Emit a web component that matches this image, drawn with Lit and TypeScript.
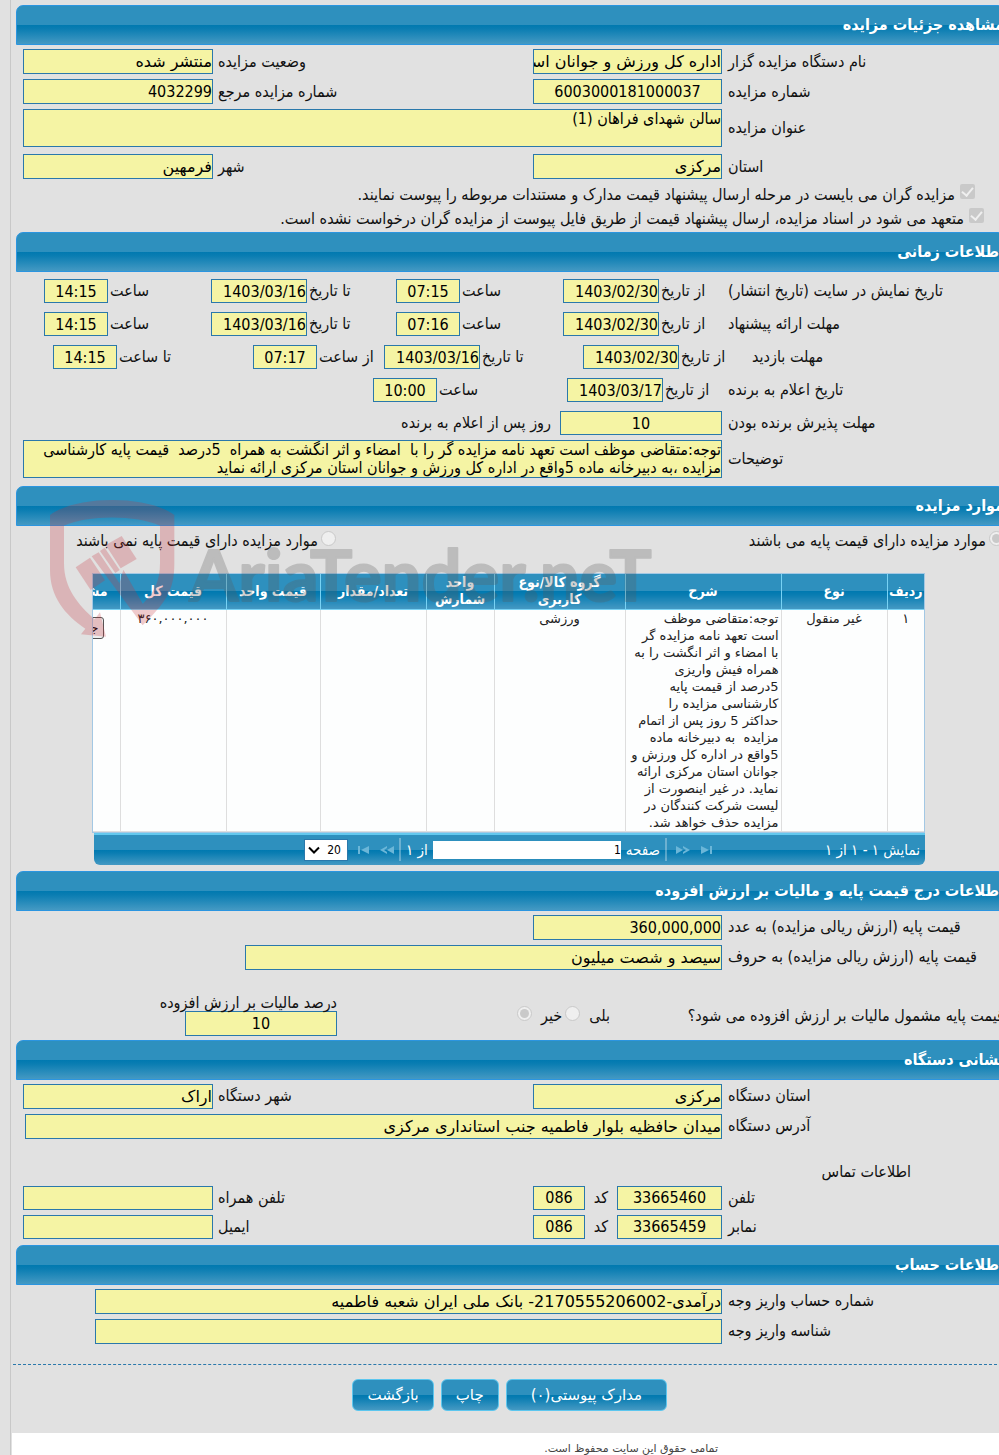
import { LitElement, html, css } from "lit";
import { customElement } from "lit/decorators.js";

@customElement("app-root")
export class AppRoot extends LitElement {
  static styles = css`
    :host {
      display: block;
      overflow: hidden;
      background: #e1e1e1;
      color: #111;
      font-family: "DejaVu Sans Condensed", "DejaVu Sans", sans-serif;
      font-size: 16px;
      line-height: 18px;
      --band: linear-gradient(#2e90be 0, #2e90be 50%, #0079b0 50%, #0a7db2 60%, #4499c3 100%);
    }
    * { box-sizing: border-box; }
    .page {
      direction: rtl;
      margin-left: 10px;
      border-left: 1px solid #c8c8c8;
      padding-top: 5px;
    }
    .title {
      margin: 0 -6px 0 5px;
      height: 40px;
      padding: 0;
      border: 1px solid #2b95e0;
      border-radius: 7px 7px 0 0;
      background: var(--band);
      color: #fff;
      font-size: 16px;
      font-weight: 700;
      line-height: 38px;
    }
    .body { padding: 4px 0 0 12px; display: flex; flex-direction: column; gap: 5px; }
    .row { display: grid; grid-template-columns: 271px minmax(0, 1fr); column-gap: 6px; align-items: center; }
    .pair { display: grid; grid-template-columns: 189px minmax(0, 1fr) 190px; column-gap: 5px; align-items: center; }
    .cap { text-align: left; white-space: nowrap; }
    input, textarea, select, button { font-family: inherit; margin: 0; }
    .field {
      display: block;
      width: 100%;
      height: 25px;
      padding: 0;
      border: 1px solid #2a78ab;
      border-radius: 0;
      background: #f5f4a4;
      color: #000;
      font-size: 16px;
      outline: none;
    }
    .text { font-family: "DejaVu Sans", sans-serif; }
    .mid { text-align: center; }
    .area { height: 38px; line-height: 18px; resize: none; overflow: hidden; white-space: pre; }
    .after-area { margin-top: 2px; }
    .checks { display: flex; flex-direction: column; padding-bottom: 1px; margin-top: -1px; }
    .check { display: flex; align-items: center; gap: 5px; height: 24px; padding-right: 15px; white-space: nowrap; }
    .inset { padding-right: 24px; }
    .tick, .dot {
      appearance: none;
      flex: none;
      width: 15px;
      height: 15px;
      border-radius: 2px;
      background: #c9c9c9;
      display: grid;
      place-items: center;
    }
    .tick { margin-bottom: 7px; }
    .tick:checked::after {
      content: "";
      width: 5px;
      height: 9px;
      margin-bottom: 2px;
      border: solid #efefef;
      border-width: 0 2px 2px 0;
      transform: rotate(40deg);
    }
    .dot { border-radius: 50%; border: 1px solid #c9c9c9; background: #efefef; }
    .dot:checked::after { content: ""; width: 9px; height: 9px; border-radius: 50%; background: #c9c9c9; }

    .times { padding-top: 7px; padding-bottom: 8px; gap: 9px; }
    .slots { display: grid; grid-template-columns: 159fr 167fr 185fr 167fr; padding-left: 21px; }
    .times .field:not(.area) { height: 24px; }
    .visit { grid-template-columns: 247px minmax(0, 1fr); }
    .visit .slots { grid-template-columns: 163fr 199fr 131fr 200fr; padding-left: 30px; }
    .winner .slots { grid-template-columns: 155px 194px; }
    .slot { display: flex; align-items: center; justify-content: flex-end; gap: 2px; white-space: nowrap; }
    .date { width: 96px; }
    .hour { width: 64px; text-align: center; }
    .days { display: flex; align-items: center; gap: 9px; }
    .days .field { width: 162px; }
    .note { margin-top: -4px; }

    .items { position: relative; padding-bottom: 6px; }
    .choices { display: grid; grid-template-columns: 663px 1fr; height: 34px; padding-top: 2px; white-space: nowrap; }
    .choice { display: flex; gap: 3px; align-items: center; height: 26px; margin-right: -5px; }
    .choice .dot { margin-bottom: 5px; }
    .choice:last-child { margin-right: 0; }
    .table-box { margin: 13px 74px 0 81px; }
    .clip { overflow: hidden; border: 1px solid #a3c8e4; background: #fdfefe; }
    .list { border-collapse: collapse; table-layout: fixed; width: 900px; }
    .list th {
      height: 35px;
      padding: 0;
      background: var(--band);
      border-left: 1px solid #78d2f4;
      border-bottom: 1px solid #78d2f4;
      color: #fff;
      font-size: 14px;
      font-weight: 700;
      line-height: 17px;
    }
    .list td {
      padding: 0 2px;
      border-left: 1px solid #dedede;
      border-bottom: 1px solid #dedede;
      vertical-align: top;
      text-align: center;
      color: #222;
      font-family: "DejaVu Sans", sans-serif;
      font-size: 13px;
      line-height: 17px;
    }
    .list .desc { text-align: right; white-space: pre; }
    .list .edge { text-align: right; padding-right: 12px; }
    .list td.edge { padding: 7px 16px 0 0; }
    .open { height: 22px; padding: 0 4px; border: 1px solid #555; border-radius: 3px; background: #eee; font-size: 13px; }
    .c1 { width: 37px; } .c2 { width: 106px; } .c3 { width: 156px; } .c4 { width: 131px; }
    .c5 { width: 68px; } .c6 { width: 106px; } .c7 { width: 94px; } .c8 { width: 106px; }
    .pager {
      display: grid;
      grid-template-columns: 207px auto 1fr;
      align-items: center;
      height: 32px;
      margin-left: 2px;
      padding-right: 5px;
      border-top: 2px solid #63c8ee;
      border-radius: 0 0 6px 6px;
      background: var(--band);
      color: #fff;
      font-size: 15px;
      white-space: nowrap;
    }
    .controls { display: flex; align-items: center; gap: 5px; }
    .step { padding: 0; border: 0; background: none; display: flex; width: 14px; margin-left: 4px; }
    .bar { width: 2px; height: 23px; background: rgba(255, 255, 255, 0.3); }
    .num { width: 188px; height: 18px; border: 0; padding: 0; background: #fff; color: #000; font-size: 12px; }
    .size { position: relative; display: flex; }
    .size select { appearance: none; width: 44px; height: 22px; padding: 0 6px 0 0; border: 1px solid #2a78ab; border-radius: 0; background: #fff; color: #000; font-size: 12px; }
    .size svg { position: absolute; left: 4px; top: 7px; pointer-events: none; }

    .mark { position: absolute; left: 37px; top: 6px; pointer-events: none; }

    .words { width: 477px; }
    .w-num { width: 189px; }
    .vat { display: flex; align-items: center; height: 65px; padding-top: 17px; white-space: nowrap; margin-right: -5px; }
    .vat-q { width: 318px; }
    .yesno { display: flex; align-items: center; gap: 3px; margin-right: 76px; width: 94px; }
    .yesno .dot { margin-bottom: 5px; }
    .yesno .gap { margin-right: 6px; }
    .rate { width: 152px; margin-right: 179px; }
    .rate label { display: block; line-height: 16px; }

    .wide { padding-left: 2px; }
    .address { padding-bottom: 6px; }
    .contact { margin: 19px 88px 0 0; }
    .phone { display: grid; grid-template-columns: 105px auto 52px; justify-content: space-between; align-items: center; }
    .lines .field { height: 24px; }
    .account .wide { padding-left: 72px; }

    .actions {
      margin: 20px 2px 0;
      padding: 14px 330px 22px 0;
      border-top: 1px dashed #2a78ab;
      display: flex;
      gap: 7px;
    }
    .act {
      height: 32px;
      padding: 0 24px;
      border: 1px solid #5cc6ee;
      border-radius: 6px;
      background: var(--band);
      color: #fff;
      font-family: "DejaVu Sans", sans-serif;
      font-size: 15px;
    }
    .snug { padding: 0 14px; }
    .foot { margin-left: 1px; height: 22px; overflow: hidden; background: #fff; color: #444; font-family: "DejaVu Sans", sans-serif; font-size: 11px; line-height: 32px; padding-right: 281px; }
  `;

  private field(id: string, value: string, cls = "") {
    return html`<input class="field ${cls}" id=${id} type="text" readonly .value=${value} />`;
  }

  private cap(id: string, text: string) {
    return html`<label class="cap" for=${id}>${text}</label>`;
  }

  private slot4(id: string, text: string, value: string, cls: string) {
    return html`<span class="slot"><label for=${id}>${text}</label>${this.field(id, value, cls)}</span>`;
  }

  private step(label: string, d: string) {
    return html`<button class="step" type="button" aria-label=${label}>
      <svg width="14" height="8" viewBox="0 0 14 8"><path d=${d} fill="#6bb6d8" /></svg>
    </button>`;
  }

  render() {
    return html`<div class="page">
      <section>
        <h2 class="title">مشاهده جزئیات مزایده</h2>
        <div class="body">
          <div class="row">
            ${this.cap("org", "نام دستگاه مزایده گزار")}
            <div class="pair">
              ${this.field("org", "اداره کل ورزش و جوانان استان مرکزی", "text")}
              ${this.cap("status", "وضعیت مزایده")} ${this.field("status", "منتشر شده", "text")}
            </div>
          </div>
          <div class="row">
            ${this.cap("no", "شماره مزایده")}
            <div class="pair">
              ${this.field("no", "6003000181000037", "mid")}
              ${this.cap("ref", "شماره مزایده مرجع")} ${this.field("ref", "4032299")}
            </div>
          </div>
          <div class="row">
            ${this.cap("subject", "عنوان مزایده")}
            <textarea class="field area" id="subject" readonly .value=${"سالن شهدای فراهان (1)"}></textarea>
          </div>
          <div class="row after-area">
            ${this.cap("province", "استان")}
            <div class="pair">
              ${this.field("province", "مرکزی", "text")} ${this.cap("city", "شهر")} ${this.field("city", "فرمهین", "text")}
            </div>
          </div>
          <div class="checks">
            <label class="check inset"><input class="tick" type="checkbox" checked disabled />مزایده گران می بایست در مرحله ارسال پیشنهاد قیمت مدارک و مستندات مربوطه را پیوست نمایند.</label>
            <label class="check"><input class="tick" type="checkbox" checked disabled />متعهد می شود در اسناد مزایده، ارسال پیشنهاد قیمت از طریق فایل پیوست از مزایده گران درخواست نشده است.</label>
          </div>
        </div>
      </section>

      <section>
        <h2 class="title">اطلاعات زمانی</h2>
        <div class="body times">
          ${[
            ["show", "تاریخ نمایش در سایت (تاریخ انتشار)", "07:15"],
            ["offer", "مهلت ارائه پیشنهاد", "07:16"],
          ].map(
            ([k, t, h]) => html`<div class="row">
              <span class="cap">${t}</span>
              <div class="slots">
                ${this.slot4(k + "1", "از تاریخ", "1403/02/30", "date")}
                ${this.slot4(k + "2", "ساعت", h, "hour")}
                ${this.slot4(k + "3", "تا تاریخ", "1403/03/16", "date")}
                ${this.slot4(k + "4", "ساعت", "14:15", "hour")}
              </div>
            </div>`
          )}
          <div class="row visit">
            <span class="cap">مهلت بازدید</span>
            <div class="slots">
              ${this.slot4("v1", "از تاریخ", "1403/02/30", "date")}
              ${this.slot4("v2", "تا تاریخ", "1403/03/16", "date")}
              ${this.slot4("v3", "از ساعت", "07:17", "hour")}
              ${this.slot4("v4", "تا ساعت", "14:15", "hour")}
            </div>
          </div>
          <div class="row winner">
            <span class="cap">تاریخ اعلام به برنده</span>
            <div class="slots">
              ${this.slot4("w1", "از تاریخ", "1403/03/17", "date")}
              ${this.slot4("w2", "ساعت", "10:00", "hour")}
            </div>
          </div>
          <div class="row">
            ${this.cap("accept", "مهلت پذیرش برنده بودن")}
            <div class="days">${this.field("accept", "10", "mid")}<span>روز پس از اعلام به برنده</span></div>
          </div>
          <div class="row note">
            ${this.cap("note", "توضیحات")}
            <textarea class="field area" id="note" readonly
              .value=${"توجه:متقاضی موظف است تعهد نامه مزایده گر را با  امضاء و اثر انگشت به همراه  5درصد  قیمت پایه کارشناسی\nمزایده ،به دبیرخانه ماده 5واقع در اداره کل ورزش و جوانان استان مرکزی ارائه نماید"}></textarea>
          </div>
        </div>
      </section>

      <section class="items">
        <h2 class="title">موارد مزایده</h2>
        <div class="choices">
          <label class="choice"><input class="dot" type="radio" name="base" checked disabled />موارد مزایده دارای قیمت پایه می باشند</label>
          <label class="choice"><input class="dot" type="radio" name="base" disabled />موارد مزایده دارای قیمت پایه نمی باشند</label>
        </div>
        <div class="table-box">
          <div class="clip">
            <table class="list">
              <colgroup>
                <col class="c1" /><col class="c2" /><col class="c3" /><col class="c4" /><col class="c5" /><col class="c6" /><col class="c7" /><col class="c8" /><col />
              </colgroup>
              <thead>
                <tr>
                  <th>ردیف</th><th>نوع</th><th>شرح</th><th>گروه کالا/نوع<br />کاربری</th><th>واحد<br />شمارش</th>
                  <th>تعداد/مقدار</th><th>قیمت واحد</th><th>قیمت کل</th><th class="edge">مشاهده</th>
                </tr>
              </thead>
              <tbody>
                <tr>
                  <td>۱</td>
                  <td>غیر منقول</td>
                  <td class="desc">${"توجه:متقاضی موظف\nاست تعهد نامه مزایده گر\nبا امضاء و اثر انگشت را به\nهمراه فیش واریزی\n5درصد از قیمت پایه\nکارشناسی مزایده را\nحداکثر 5 روز پس از اتمام\nمزایده  به دبیرخانه ماده\n5واقع در اداره کل ورزش و\nجوانان استان مرکزی ارائه\nنماید. در غیر اینصورت از\nلیست شرکت کنندگان در\nمزایده حذف خواهد شد."}</td>
                  <td>ورزشی</td><td></td><td></td><td></td>
                  <td>۳۶۰,۰۰۰,۰۰۰</td>
                  <td class="edge"><button class="open" type="button">جزئیات</button></td>
                </tr>
              </tbody>
            </table>
          </div>
          <div class="pager">
            <span>نمایش ۱ - ۱ از ۱</span>
            <div class="controls">
              ${this.step("آخرین", "M2 0L10 4L2 8ZM11 0H13V8H11Z")}
              ${this.step("بعدی", "M0 0L7 4L0 8ZM7 0L14 4L7 8V6L10 4L7 2Z")}
              <span class="bar"></span>
              <label for="pg">صفحه</label>
              <input class="num" id="pg" type="text" .value=${"1"} />
              <span>از ۱</span>
              <span class="bar"></span>
              ${this.step("قبلی", "M14 0L7 4L14 8ZM7 0L0 4L7 8V6L4 4L7 2Z")}
              ${this.step("اولین", "M12 0L4 4L12 8ZM1 0H3V8H1Z")}
              <span class="size">
                <select aria-label="تعداد در صفحه"><option>20</option></select>
                <svg width="12" height="9" viewBox="0 0 12 9"><path d="M1 1.5L6 6.5L11 1.5" fill="none" stroke="#000" stroke-width="2" /></svg>
              </span>
            </div>
          </div>
        </div>
        <svg class="mark" width="620" height="150" viewBox="144 36 1860 450" aria-hidden="true">
          <g fill="#c8323c" opacity="0.25">
            <path d="M150 105C230 45 443 45 523 105V250C523 330 500 365 428 436L354 325L370 270L428 372C465 335 480 300 480 250V137C410 104 262 104 192 137V250C192 325 235 375 284 418L300 397L318 470L243 463L256 446C195 405 150 350 150 270Z" />
            <path d="M275 229L296 217L362 315L370 270L428 372V436Z" />
            <path d="M227 262L270 233L315 301L272 330Z" />
            <path d="M300 213L314 203L359 270L346 279Z" />
            <path d="M317 195L365 168L410 237L362 265Z" />
          </g>
          <text x="568" y="363" direction="ltr" fill="#5a5a5a" stroke="#5a5a5a" stroke-width="6" stroke-linejoin="round" opacity="0.27" font-family="Lato, Liberation Sans, sans-serif" font-weight="700" font-size="212">AriaTender.neT</text>
        </svg>
      </section>

      <section>
        <h2 class="title">اطلاعات درج قیمت پایه و مالیات بر ارزش افزوده</h2>
        <div class="body">
          <div class="row">${this.cap("base", "قیمت پایه (ارزش ریالی مزایده) به عدد")}${this.field("base", "360,000,000", "w-num")}</div>
          <div class="row">${this.cap("basew", "قیمت پایه (ارزش ریالی مزایده) به حروف")}${this.field("basew", "سیصد و شصت میلیون", "text words")}</div>
          <div class="vat">
            <span class="vat-q">قیمت پایه مشمول مالیات بر ارزش افزوده می شود؟</span>
            <div class="yesno">
              <label for="yes">بلی</label><input class="dot gap" id="yes" type="radio" name="vat" disabled />
              <label for="no-vat">خیر</label><input class="dot gap" id="no-vat" type="radio" name="vat" checked disabled />
            </div>
            <div class="rate"><label for="rate">درصد مالیات بر ارزش افزوده</label>${this.field("rate", "10", "mid")}</div>
          </div>
        </div>
      </section>

      <section>
        <h2 class="title">نشانی دستگاه</h2>
        <div class="body address">
          <div class="row">
            ${this.cap("op", "استان دستگاه")}
            <div class="pair">${this.field("op", "مرکزی", "text")}${this.cap("oc", "شهر دستگاه")}${this.field("oc", "اراک", "text")}</div>
          </div>
          <div class="row">
            ${this.cap("addr", "آدرس دستگاه")}
            <div class="wide">${this.field("addr", "میدان حافظیه بلوار فاطمیه جنب استانداری مرکزی", "text")}</div>
          </div>
          <div class="contact">اطلاعات تماس</div>
          ${[
            ["tel", "تلفن", "33665460", "تلفن همراه"],
            ["fax", "نمابر", "33665459", "ایمیل"],
          ].map(
            ([k, t, v, s]) => html`<div class="row lines">
              ${this.cap(k, t)}
              <div class="pair">
                <div class="phone">
                  ${this.field(k, v, "mid")}<label for=${k + "c"}>کد</label>${this.field(k + "c", "086", "mid")}
                </div>
                ${this.cap(k + "s", s)}${this.field(k + "s", "")}
              </div>
            </div>`
          )}
        </div>
      </section>

      <section>
        <h2 class="title">اطلاعات حساب</h2>
        <div class="body account">
          <div class="row">${this.cap("acc", "شماره حساب واریز وجه")}<div class="wide">${this.field("acc", "درآمدی-2170555206002- بانک ملی ایران شعبه فاطمیه", "text")}</div></div>
          <div class="row">${this.cap("pid", "شناسه واریز وجه")}<div class="wide">${this.field("pid", "")}</div></div>
        </div>
      </section>

      <div class="actions">
        <button class="act" type="button">مدارک پیوستی(۰)</button>
        <button class="act snug" type="button">چاپ</button>
        <button class="act snug" type="button">بازگشت</button>
      </div>
      <footer class="foot">تمامی حقوق این سایت محفوظ است.</footer>
    </div>`;
  }
}
